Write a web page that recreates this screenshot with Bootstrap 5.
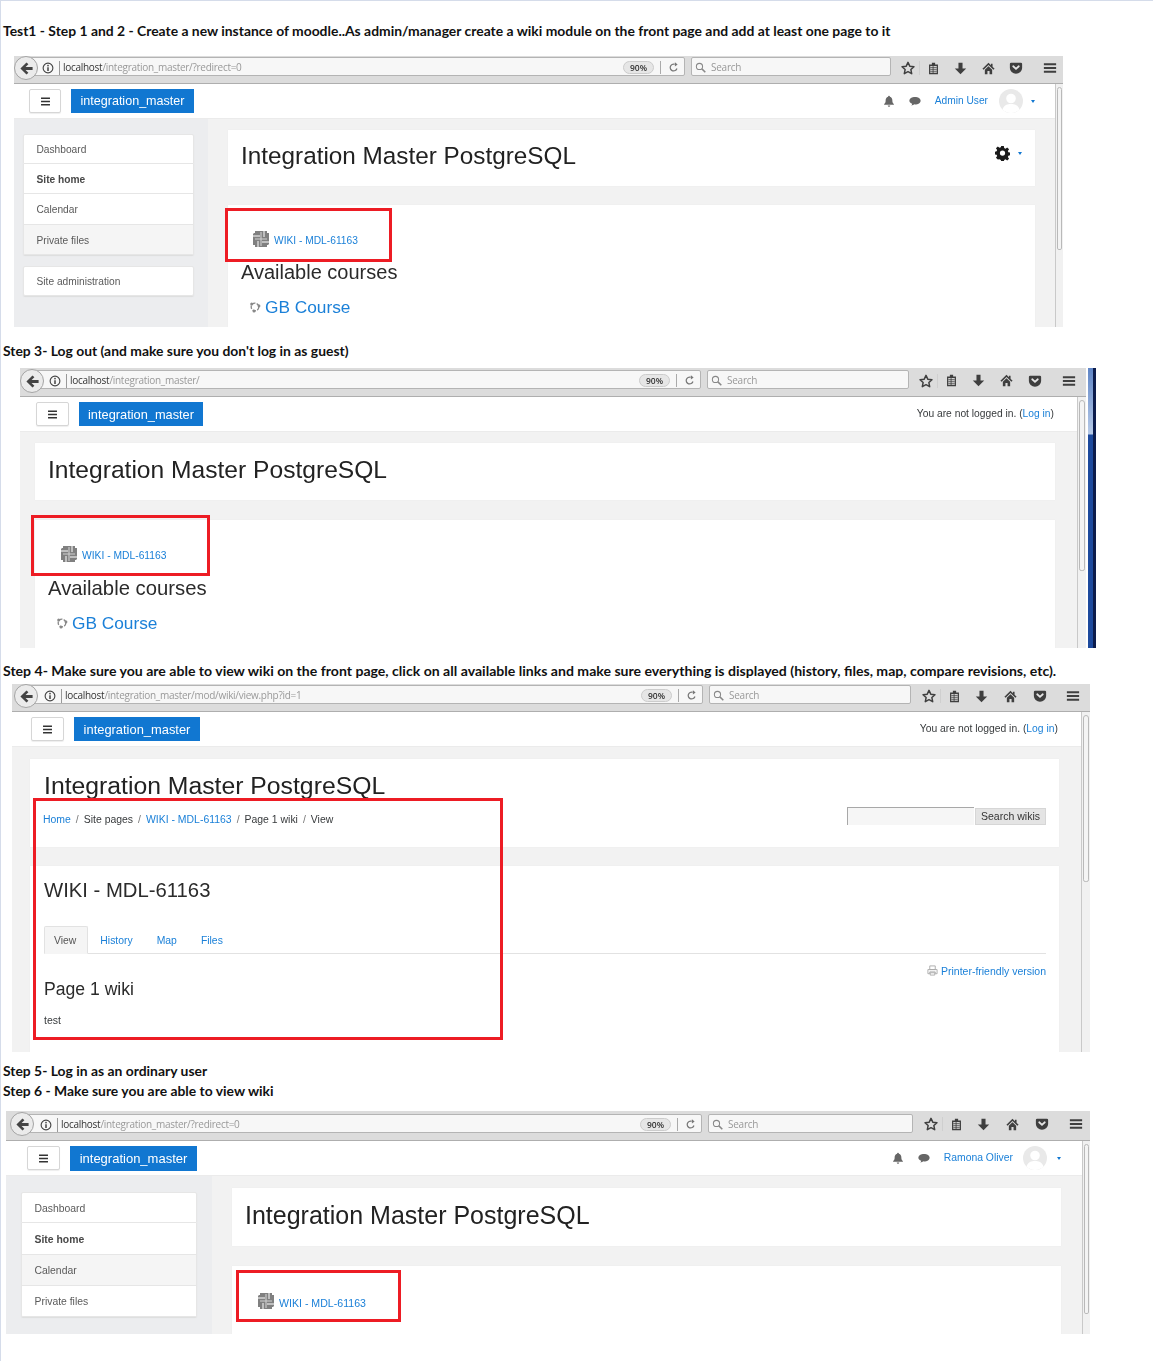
<!DOCTYPE html>
<html lang="en">
<head>
<meta charset="utf-8">
<title>Test steps</title>
<link href="https://cdn.jsdelivr.net/npm/bootstrap@5.3.0/dist/css/bootstrap.min.css" rel="stylesheet">
<style>
html,body{background:#fff;margin:0}
.sheet{border-top:1px solid #d5dcea;border-left:1px solid #d5dcea;height:1361px;overflow:hidden;font-family:"Liberation Sans",Arial,sans-serif;color:#373a3c}
.cap{font-family:Lato,sans-serif;font-weight:700;font-size:13.9px;line-height:20px;color:#111;padding-left:2px;margin:0;white-space:nowrap}
.cap-a{margin-top:20px}.cap-b{margin-top:14px}.cap-c{margin-top:13px;font-size:14.08px}.cap-d{margin-top:9px}
.shot{position:relative;overflow:hidden;display:flex;filter:blur(.35px)}
.shot-a{--tb:28px;--sw:200px;--tw:172px;--tp:5px;--p:28px;--r:0px;--hl:15px;--hw:32px;--bw:123px;--bf:12.57px;--bh:24px;--blh:24px;--h1:24.3px;--ht:11px;--f:10.23px;--uf:10.2px;--pl:20px;--pr:20px;--pt:11px;--ch:56px;--cg:19px;--ci:13px;--ix:11px;--side:194px;--sm:9px;--smr:14px;--st:15px;--sh:30.2px;--ut:1px;--ul:11px;--bl:0px;--bt:0px;--sbw:8px;--wt:25px;--ur:20.5px;--am:11px;--cm:7.5px;
  margin:15px 0 0 13px;width:1049px;height:271px}
.shot-b{--tb:29px;--sw:202px;--tw:177px;--tp:5px;--p:28.5px;--r:4px;--hl:16px;--hw:33px;--bw:124px;--bf:12.8px;--bh:24px;--blh:25px;--h1:24.6px;--ht:12px;--f:10.3px;--uf:10.27px;--pl:15px;--pr:22px;--pt:11px;--ch:57px;--cg:20px;--ci:13px;--ix:12px;--ut:2px;--ul:12px;--bl:0px;--bt:1px;--sbw:9px;--wt:25px;
  margin:7px 0 0 19px;width:1076px;height:280px}
.shot-c{--tb:28px;--sw:202px;--tw:179px;--tp:6px;--p:29px;--r:4px;--hl:19px;--hw:33px;--bw:126px;--bf:12.9px;--bh:24px;--blh:25px;--h1:24.75px;--ht:12px;--f:10.5px;--uf:10.35px;--pl:18px;--pr:22px;--pt:12px;--ch:88px;--cg:19px;--ci:14px;--ix:12px;--ut:1px;--ul:13px;--bl:2px;--bt:0px;--sbw:9px;
  margin:3px 0 0 11px;width:1078px;height:368px}
.shot-d{--tb:30px;--sw:205px;--tw:177px;--tp:6px;--p:29px;--r:1px;--hl:21px;--hw:33px;--bw:127px;--bf:13px;--bh:25px;--blh:25px;--h1:25px;--ht:12px;--f:10.6px;--uf:10.4px;--pl:20px;--pr:21px;--pt:12px;--ch:58px;--cg:20px;--ci:13px;--ix:12px;--side:206px;--sm:15px;--smr:15px;--st:16px;--sh:31.25px;--ut:3px;--ul:13px;--bl:4px;--bt:1px;--sbw:8px;--wt:26px;--ur:21.5px;--am:10px;--cm:9.5px;
  margin:10px 0 0 5px;width:1084px;height:223px}
.inner{flex:1 1 auto;min-width:0;display:flex;flex-direction:column}
.stripe{flex:0 0 8px;margin-left:2px;background:linear-gradient(90deg,transparent 62%,#0c1c4c 62%),linear-gradient(180deg,#5f85c6 0,#b8cbe8 66px,#1d4a9d 67px,#1d4a9d 100%)}
/* browser toolbar */
.tb{height:var(--tb);flex:0 0 var(--tb);background:#dcdcdc;border-bottom:1px solid #aeaeae;display:flex;align-items:flex-start;position:relative;font-family:"Open Sans",sans-serif}
.backb{flex:0 0 24px;width:24px;height:24px;margin:var(--bt) -8px 0 var(--bl);border-radius:50%;background:#ebebeb;border:1px solid #a4a4a4;display:flex;align-items:center;justify-content:center;position:relative;z-index:1;color:#444}
.urlb{flex:1 1 auto;height:19px;margin-top:var(--ut);background:#f7f7f7;border:1px solid #b4b4b4;border-radius:0 2px 2px 0;display:flex;align-items:center;padding:2px 0 0 var(--ul);font-size:10px;letter-spacing:-.28px;color:#999;min-width:0;white-space:nowrap}
.urlb b{font-weight:400;color:#333}
.ubi{color:#444;display:flex;margin-right:5px}
.usep{width:1px;height:14px;background:#999;margin-right:3px}
.upct{margin-left:auto;background:#e6e6e6;border:1px solid #ccc;border-radius:8px;font-size:8.5px;color:#333;line-height:11px;padding:0 6px;font-weight:600;letter-spacing:0}
.usep2{width:1px;height:13px;background:#aaa;margin:0 7px 0 6px}
.urel{color:#777;display:flex;margin-right:5px}
.srch{flex:0 0 var(--sw);width:var(--sw);height:19px;margin:var(--ut) 0 0 6px;background:#f7f7f7;border:1px solid #b4b4b4;border-radius:2px;display:flex;align-items:center;gap:5px;padding:2px 0 0 3px;font-size:10px;letter-spacing:-.25px;color:#999}
.srch svg{color:#888}
.tools{flex:0 0 var(--tw);width:var(--tw);display:flex;height:100%;align-items:center;color:#3f3f3f;padding:0 0 3px var(--tp)}
.tslot{flex:0 0 var(--p);width:var(--p);display:flex;justify-content:center}
.tslot-st{flex:0 0 24px;width:24px;display:flex;justify-content:center;border-right:1px solid #cfcfcf}
.tslot-cl{flex:0 0 26px;width:26px;display:flex;justify-content:center}
.tslot-me{flex:0 0 26px;width:26px;display:flex;justify-content:center;margin-left:auto;margin-right:var(--r)}
/* moodle page */
.view{flex:1 1 auto;display:flex;min-height:0}
.pg{flex:1 1 auto;min-width:0;display:flex;flex-direction:column;background:#f2f2f2}
.bar{flex:0 0 var(--sbw);width:var(--sbw);background:#f1f1f1;border-left:1px solid #c9c9c9;padding:3px 1px 0}
.thumb{background:#f4f4f4;border:1px solid #b9b9b9;border-radius:4px 4px 3px 3px;width:100%}
.thumb-a{height:163px}.thumb-b{height:171px}.thumb-c{height:167px}.thumb-d{height:170px}
.mnav{flex:0 0 35px;height:35px;background:#fff;border-bottom:1px solid #ebebeb;padding:0 0 0 var(--hl);display:flex;align-items:center;font-size:var(--uf);flex-wrap:nowrap;justify-content:flex-start}
.hamb{width:var(--hw);height:24px;background:#fff;border:1px solid #d6d6d6;border-radius:2px;display:flex;align-items:center;justify-content:center;color:#333;box-shadow:0 1px 1px #eee;padding:0}
.brandb{width:var(--bw);height:var(--bh);margin-left:10px;background:#1177d1;color:#fff;font-size:var(--bf);line-height:var(--blh);text-align:center;white-space:nowrap;text-decoration:none}
.userb{margin-left:auto;display:flex;align-items:center;color:#666;white-space:pre}
.lnk{color:#1b80d8;text-decoration:none}
.uname{margin-left:13.5px}.bell2{margin-left:14px;display:flex}.bell1{display:flex}
.avat{margin-left:var(--am);display:flex}
.ucaret{margin-left:var(--cm);margin-right:var(--ur);width:0;height:0;border-left:2.5px solid transparent;border-right:2.5px solid transparent;border-top:3px solid #1177d1}
.nolog{margin-right:23px;color:#373a3c}
.cols{flex:1 1 auto;display:flex;min-height:0}
.side{flex:0 0 var(--side);width:var(--side);background:#ecedef;padding:var(--st) var(--smr) 0 var(--sm)}
.side .list-group{border-radius:2px;box-shadow:0 1px 1px #ddd;margin-bottom:11px}
.side .list-group-item{height:var(--sh);padding:2px 12.5px 0;display:flex;align-items:center;font-size:var(--uf);color:#5a5a5a;border-color:#e6e6e6;background:#fff}
.side .list-group-item.sel{font-weight:700;color:#484848}
.side .list-group-item.hov{background:#f5f5f5}
.maincol{flex:1 1 auto;min-width:0;padding:var(--pt) var(--pr) 0 var(--pl);overflow:hidden}
.sect{background:#fff;border:0;border-radius:0;padding:0 var(--ci);box-shadow:0 0 1px #e4e4e4}
.head{height:var(--ch);display:flex;align-items:flex-start;justify-content:space-between;margin-bottom:var(--cg)}
.head h1{font-size:var(--h1);font-weight:400;line-height:30px;margin:0;padding-top:var(--ht);white-space:nowrap;color:#222}
.gear{display:flex;align-items:center;gap:8px;padding:16px 0 0 0;color:#1a1a1a}
.gear i{display:block;width:0;height:0;border-left:2.5px solid transparent;border-right:2.5px solid transparent;border-top:3px solid #1177d1}
.body2{height:400px;padding-top:var(--wt)}
.wikir{display:flex;align-items:flex-end;margin-left:var(--ix);gap:4px;font-size:var(--f);line-height:14px}
.wikir svg{display:block}
.wikir a{padding-bottom:.4px}
.avail{font-size:20px;line-height:24px;font-weight:400;margin:12px 0 0;color:#2b2b2b}
.gbr{display:flex;align-items:center;gap:4px;margin:11px 0 0 8px;font-size:17.3px;line-height:24px}
.gbr svg{color:#888}
.shot-b .avail{font-size:20.3px;margin-top:13px}
.shot-b .gbr{margin-top:11px;font-size:17.3px}
/* wiki page */
.head-c{display:block}
.crumbr{display:flex;justify-content:space-between;align-items:flex-start;margin:6px -1px 0 -1px;height:19px}
.breadcrumb{--bs-breadcrumb-margin-bottom:0;--bs-breadcrumb-item-padding-x:5px;--bs-breadcrumb-font-size:10.45px;--bs-breadcrumb-divider-color:#777;--bs-breadcrumb-item-active-color:#373a3c;line-height:14px;margin-top:6px}
.wsrch{display:flex;align-items:flex-start;margin-top:0}
.wsrch .fld{width:127px;height:18px;background:#f6f6f6;border-top:1px solid #a8a8a8;border-left:1px solid #a8a8a8;display:block}
.wsrch .gobtn{width:71px;height:17px;font-size:10.5px;line-height:15px;padding:0;margin:1px 0 0 1px;background:#e4e4e4;border:1px solid #d6d6d6;border-radius:0;color:#333}
.wbody{height:400px;padding-top:11px}
.wbody h2{font-size:20.3px;line-height:26px;font-weight:400;margin:0;color:#2b2b2b}
.wtabs{margin-top:23px;height:27.5px;font-size:10.4px;--bs-nav-tabs-border-color:#e2e2e2;--bs-nav-tabs-border-radius:2px;flex-wrap:nowrap;margin-right:-1px}
.wtabs .nav-link{padding:0 11px;height:27.5px;line-height:28px;color:#1b80d8;border:1px solid transparent}
.wtabs .nav-link.active{background:#f5f5f5;color:#555;border-color:#e2e2e2 #e2e2e2 #f5f5f5;padding-left:9px}
.prt{display:flex;justify-content:flex-end;align-items:center;gap:3px;font-size:10.5px;line-height:14px;margin:10px -1px 0 0;color:#aaa}
.pw{font-size:17.6px;line-height:22px;font-weight:400;margin:0;color:#2b2b2b}
.tst{font-size:10.5px;line-height:14px;margin:13px 0 0}
.redb{position:absolute;border:3.5px solid #ed1c24;z-index:5}
.rb-a{left:211px;top:152px;width:167px;height:54px}
.rb-b{left:11px;top:147px;width:179px;height:61px}
.rb-c{left:21px;top:114px;width:470px;height:242px}
.rb-d{left:230px;top:159px;width:165px;height:52px}
</style>
</head>
<body>
<svg class="d-none" xmlns="http://www.w3.org/2000/svg">
<symbol id="i-back" viewBox="0 0 16 16"><path d="M8 1.500 1.500 8 8 14.500l2-2L7 9.600h7.500V6.400H7l3-2.900z" fill="currentColor"/></symbol>
<symbol id="i-info" viewBox="0 0 16 16"><circle cx="8" cy="8" r="6.500" fill="none" stroke="currentColor" stroke-width="1.500"/><rect x="7" y="7" width="2" height="5" fill="currentColor"/><rect x="7" y="3.800" width="2" height="2" fill="currentColor"/></symbol>
<symbol id="i-rel" viewBox="0 0 16 16"><path d="M13 9.500A5 5 0 1 1 9.800 3.300" fill="none" stroke="currentColor" stroke-width="1.800"/><path d="M10 .5v6l4-3z" fill="currentColor"/></symbol>
<symbol id="i-glass" viewBox="0 0 16 16"><circle cx="6.500" cy="6.500" r="4.500" fill="none" stroke="currentColor" stroke-width="1.500"/><path d="m10 10 5 5" stroke="currentColor" stroke-width="2.200"/></symbol>
<symbol id="i-star" viewBox="0 0 16 16"><path d="m8 1.500 2 4.400 4.800.6-3.500 3.300.9 4.700L8 12.200l-4.200 2.300.9-4.700L1.200 6.500 6 5.900z" fill="none" stroke="currentColor" stroke-width="1.700" stroke-linejoin="round"/></symbol>
<symbol id="i-clip" viewBox="0 0 16 16"><path d="M6 1h4v2h3.500v12h-11V3H6z" fill="currentColor"/><path d="M4 5h8v8.500H4z" fill="#dcdcdc"/><path d="M4 7h8M4 9.500h8M4 12h8M7.500 5v9" stroke="currentColor" stroke-width="1"/></symbol>
<symbol id="i-down" viewBox="0 0 16 16"><path d="M5.500 1h5v7H15l-7 7-7-7h4.500z" fill="currentColor"/></symbol>
<symbol id="i-home" viewBox="0 0 16 16"><path d="M8 1 .5 8.300 2 9.500l6-5.700 6 5.700 1.500-1.200L13 5.800V2h-2v1.900z" fill="currentColor"/><path d="M3.500 9.500 8 5.300l4.500 4.200V15H9.300v-4H6.700v4H3.500z" fill="currentColor"/></symbol>
<symbol id="i-pocket" viewBox="0 0 16 16"><path d="M2.500 2h11A1.500 1.500 0 0 1 15 3.500V8A7 6.500 0 0 1 1 8V3.500A1.500 1.500 0 0 1 2.500 2z" fill="currentColor"/><path d="M4.800 6 8 9l3.200-3" fill="none" stroke="#e6e6e6" stroke-width="2" stroke-linecap="round"/></symbol>
<symbol id="i-menu" viewBox="0 0 16 16"><path d="M1 2.500h14v2.300H1zM1 6.900h14v2.300H1zM1 11.200h14v2.300H1z" fill="currentColor"/></symbol>
<symbol id="i-bars" viewBox="0 0 16 16"><path d="M2.500 3h11v1.800h-11zM2.500 7.100h11v1.800h-11zM2.500 11.200h11V13h-11z" fill="currentColor"/></symbol>
<symbol id="i-bell" viewBox="0 0 16 16"><path d="M8 1a1.200 1.200 0 0 1 1.200 1.300C11.500 3 12.500 5 12.500 7.500c0 2.500.8 3.500 2 4.500v1h-13v-1c1.200-1 2-2 2-4.500S4.500 3 6.800 2.300A1.200 1.200 0 0 1 8 1zM6.300 14h3.400a1.700 1.700 0 0 1-3.400 0z" fill="currentColor"/></symbol>
<symbol id="i-chat" viewBox="0 0 16 16"><path d="M8 2.500c4 0 7.500 2 7.500 5s-3.500 5-7.500 5l-1-.1c-1 1-2.500 1.700-4 1.600.7-.7 1.200-1.500 1.300-2.400C2 10.700.5 9.200.5 7.500c0-3 3.500-5 7.500-5z" fill="currentColor"/></symbol>
<symbol id="i-gear" viewBox="0 0 16 16"><path d="M6.600 0h2.800l.4 2.200 1.400.6L13 1.500l2 2-1.300 1.800.6 1.400 2.200.4v2.800l-2.200.4-.6 1.400 1.300 1.800-2 2-1.800-1.300-1.400.6-.4 2.200H6.600l-.4-2.200-1.400-.6L3 14.500l-2-2 1.300-1.800-.6-1.400L-.5 8.900V6.100l2.200-.4.600-1.400L1 2.500l2-2 1.800 1.300 1.400-.6z" fill="currentColor"/><circle cx="8" cy="7.500" r="2.800" fill="#fff"/></symbol>
<symbol id="i-avatar" viewBox="0 0 24 24"><circle cx="12" cy="12" r="12" fill="#e9e9e9"/><circle cx="12" cy="9.500" r="4.800" fill="#fff"/><path d="M3.500 20.500c1.500-4.500 5-5.500 8.500-5.500s7 1 8.500 5.500A12 12 0 0 1 12 24a12 12 0 0 1-8.500-3.500z" fill="#fff"/></symbol>
<symbol id="i-wiki" viewBox="0 0 18 18"><g fill="#808080"><rect x="1" y="3" width="16" height="12"/><rect x="3" y="1" width="12" height="16"/></g><g fill="none" stroke="#fff" stroke-width="1"><path d="M0 6h8M10 12h8M6 11v7M12 0v7M1 3h1M16 15h1"/></g><g fill="none" stroke="#cfcfcf" stroke-width="1.100"><path d="M9 2v14M3 9h12"/></g></symbol>
<symbol id="i-gb" viewBox="0 0 12 12"><circle cx="6" cy="6" r="3.800" fill="none" stroke="currentColor" stroke-width="1.300" stroke-dasharray="3.500 1.300"/><circle cx="2.700" cy="3" r="1.500" fill="currentColor"/><circle cx="10" cy="5" r="1.400" fill="currentColor"/><circle cx="5" cy="10" r="1.500" fill="currentColor"/></symbol>
<symbol id="i-print" viewBox="0 0 12 12"><path d="M3 1h6v4H3zM1 5h10v4.500H9V7.500H3v2H1zM3.500 8.500h5V11h-5z" fill="none" stroke="currentColor" stroke-width="1"/></symbol>
</svg>

<div class="sheet">
<p class="cap cap-a">Test1 - Step 1 and 2 - Create a new instance of moodle..As admin/manager create a wiki module on the front page and add at least one page to it</p>

<div class="shot shot-a">
 <div class="inner">
  <div class="tb">
   <span class="backb"><svg width="15" height="15"><use href="#i-back"/></svg></span>
   <div class="urlb"><span class="ubi"><svg width="12" height="12"><use href="#i-info"/></svg></span><span class="usep"></span><span><b>localhost</b>/integration_master/?redirect=0</span><span class="upct">90%</span><span class="usep2"></span><span class="urel"><svg width="11" height="11"><use href="#i-rel"/></svg></span></div>
   <div class="srch"><svg width="11" height="11"><use href="#i-glass"/></svg><span>Search</span></div>
   <div class="tools"><span class="tslot-st"><svg width="14" height="14"><use href="#i-star"/></svg></span><span class="tslot-cl"><svg width="13" height="13"><use href="#i-clip"/></svg></span><span class="tslot"><svg width="13" height="13"><use href="#i-down"/></svg></span><span class="tslot"><svg width="13" height="13"><use href="#i-home"/></svg></span><span class="tslot"><svg width="14" height="14"><use href="#i-pocket"/></svg></span><span class="tslot-me"><svg width="14" height="14"><use href="#i-menu"/></svg></span></div>
  </div>
  <div class="view">
   <div class="pg">
    <nav class="mnav">
     <button class="hamb" type="button"><svg width="13" height="13"><use href="#i-bars"/></svg></button>
     <a class="brandb">integration_master</a>
     <div class="userb"><span class="bell1"><svg width="12" height="12"><use href="#i-bell"/></svg></span><span class="bell2"><svg width="12" height="12"><use href="#i-chat"/></svg></span><a class="uname lnk">Admin User</a><span class="avat"><svg width="24" height="24"><use href="#i-avatar"/></svg></span><span class="ucaret"></span></div>
    </nav>
    <div class="cols">
     <aside class="side">
      <div class="list-group"><div class="list-group-item">Dashboard</div><div class="list-group-item sel">Site home</div><div class="list-group-item">Calendar</div><div class="list-group-item hov">Private files</div></div>
      <div class="list-group"><div class="list-group-item">Site administration</div></div>
     </aside>
     <main class="maincol">
      <section class="sect head"><h1>Integration Master PostgreSQL</h1><span class="gear"><svg width="15" height="15"><use href="#i-gear"/></svg><i></i></span></section>
      <section class="sect body2">
       <div class="wikir"><svg width="18" height="18"><use href="#i-wiki"/></svg><a class="lnk">WIKI - MDL-61163</a></div>
       <h2 class="avail">Available courses</h2>
       <div class="gbr"><svg width="12" height="12"><use href="#i-gb"/></svg><a class="lnk">GB Course</a></div>
      </section>
     </main>
    </div>
   </div>
   <div class="bar"><div class="thumb thumb-a"></div></div>
  </div>
 </div>
 <div class="redb rb-a"></div>
</div>

<p class="cap cap-b">Step 3- Log out (and make sure you don't log in as guest)</p>

<div class="shot shot-b">
 <div class="inner">
  <div class="tb">
   <span class="backb"><svg width="15" height="15"><use href="#i-back"/></svg></span>
   <div class="urlb"><span class="ubi"><svg width="12" height="12"><use href="#i-info"/></svg></span><span class="usep"></span><span><b>localhost</b>/integration_master/</span><span class="upct">90%</span><span class="usep2"></span><span class="urel"><svg width="11" height="11"><use href="#i-rel"/></svg></span></div>
   <div class="srch"><svg width="11" height="11"><use href="#i-glass"/></svg><span>Search</span></div>
   <div class="tools"><span class="tslot-st"><svg width="14" height="14"><use href="#i-star"/></svg></span><span class="tslot-cl"><svg width="13" height="13"><use href="#i-clip"/></svg></span><span class="tslot"><svg width="13" height="13"><use href="#i-down"/></svg></span><span class="tslot"><svg width="13" height="13"><use href="#i-home"/></svg></span><span class="tslot"><svg width="14" height="14"><use href="#i-pocket"/></svg></span><span class="tslot-me"><svg width="14" height="14"><use href="#i-menu"/></svg></span></div>
  </div>
  <div class="view">
   <div class="pg">
    <nav class="mnav">
     <button class="hamb" type="button"><svg width="13" height="13"><use href="#i-bars"/></svg></button>
     <a class="brandb">integration_master</a>
     <div class="userb nolog">You are not logged in. (<a class="lnk">Log in</a>)</div>
    </nav>
    <div class="cols">
     <main class="maincol">
      <section class="sect head"><h1>Integration Master PostgreSQL</h1></section>
      <section class="sect body2">
       <div class="wikir"><svg width="18" height="18"><use href="#i-wiki"/></svg><a class="lnk">WIKI - MDL-61163</a></div>
       <h2 class="avail">Available courses</h2>
       <div class="gbr"><svg width="12" height="12"><use href="#i-gb"/></svg><a class="lnk">GB Course</a></div>
      </section>
     </main>
    </div>
   </div>
   <div class="bar"><div class="thumb thumb-b"></div></div>
  </div>
 </div>
 <div class="stripe"></div>
 <div class="redb rb-b"></div>
</div>

<p class="cap cap-c">Step 4- Make sure you are able to view wiki on the front page, click on all available links and make sure everything is displayed (history, files, map, compare revisions, etc).</p>

<div class="shot shot-c">
 <div class="inner">
  <div class="tb">
   <span class="backb"><svg width="15" height="15"><use href="#i-back"/></svg></span>
   <div class="urlb"><span class="ubi"><svg width="12" height="12"><use href="#i-info"/></svg></span><span class="usep"></span><span><b>localhost</b>/integration_master/mod/wiki/view.php?id=1</span><span class="upct">90%</span><span class="usep2"></span><span class="urel"><svg width="11" height="11"><use href="#i-rel"/></svg></span></div>
   <div class="srch"><svg width="11" height="11"><use href="#i-glass"/></svg><span>Search</span></div>
   <div class="tools"><span class="tslot-st"><svg width="14" height="14"><use href="#i-star"/></svg></span><span class="tslot-cl"><svg width="13" height="13"><use href="#i-clip"/></svg></span><span class="tslot"><svg width="13" height="13"><use href="#i-down"/></svg></span><span class="tslot"><svg width="13" height="13"><use href="#i-home"/></svg></span><span class="tslot"><svg width="14" height="14"><use href="#i-pocket"/></svg></span><span class="tslot-me"><svg width="14" height="14"><use href="#i-menu"/></svg></span></div>
  </div>
  <div class="view">
   <div class="pg">
    <nav class="mnav">
     <button class="hamb" type="button"><svg width="13" height="13"><use href="#i-bars"/></svg></button>
     <a class="brandb">integration_master</a>
     <div class="userb nolog">You are not logged in. (<a class="lnk">Log in</a>)</div>
    </nav>
    <div class="cols">
     <main class="maincol">
      <section class="sect head head-c">
       <h1>Integration Master PostgreSQL</h1>
       <div class="crumbr">
        <nav><ol class="breadcrumb"><li class="breadcrumb-item"><a class="lnk">Home</a></li><li class="breadcrumb-item">Site pages</li><li class="breadcrumb-item"><a class="lnk">WIKI - MDL-61163</a></li><li class="breadcrumb-item">Page 1 wiki</li><li class="breadcrumb-item active">View</li></ol></nav>
        <div class="wsrch"><span class="fld"></span><button class="gobtn" type="button">Search wikis</button></div>
       </div>
      </section>
      <section class="sect wbody">
       <h2>WIKI - MDL-61163</h2>
       <ul class="nav nav-tabs wtabs"><li class="nav-item"><a class="nav-link active">View</a></li><li class="nav-item"><a class="nav-link">History</a></li><li class="nav-item"><a class="nav-link">Map</a></li><li class="nav-item"><a class="nav-link">Files</a></li></ul>
       <div class="prt"><svg width="11" height="11"><use href="#i-print"/></svg><a class="lnk">Printer-friendly version</a></div>
       <h3 class="pw">Page 1 wiki</h3>
       <p class="tst">test</p>
      </section>
     </main>
    </div>
   </div>
   <div class="bar"><div class="thumb thumb-c"></div></div>
  </div>
 </div>
 <div class="redb rb-c"></div>
</div>

<p class="cap cap-d">Step 5- Log in as an ordinary user</p>
<p class="cap">Step 6 - Make sure you are able to view wiki</p>

<div class="shot shot-d">
 <div class="inner">
  <div class="tb">
   <span class="backb"><svg width="15" height="15"><use href="#i-back"/></svg></span>
   <div class="urlb"><span class="ubi"><svg width="12" height="12"><use href="#i-info"/></svg></span><span class="usep"></span><span><b>localhost</b>/integration_master/?redirect=0</span><span class="upct">90%</span><span class="usep2"></span><span class="urel"><svg width="11" height="11"><use href="#i-rel"/></svg></span></div>
   <div class="srch"><svg width="11" height="11"><use href="#i-glass"/></svg><span>Search</span></div>
   <div class="tools"><span class="tslot-st"><svg width="14" height="14"><use href="#i-star"/></svg></span><span class="tslot-cl"><svg width="13" height="13"><use href="#i-clip"/></svg></span><span class="tslot"><svg width="13" height="13"><use href="#i-down"/></svg></span><span class="tslot"><svg width="13" height="13"><use href="#i-home"/></svg></span><span class="tslot"><svg width="14" height="14"><use href="#i-pocket"/></svg></span><span class="tslot-me"><svg width="14" height="14"><use href="#i-menu"/></svg></span></div>
  </div>
  <div class="view">
   <div class="pg">
    <nav class="mnav">
     <button class="hamb" type="button"><svg width="13" height="13"><use href="#i-bars"/></svg></button>
     <a class="brandb">integration_master</a>
     <div class="userb"><span class="bell1"><svg width="12" height="12"><use href="#i-bell"/></svg></span><span class="bell2"><svg width="12" height="12"><use href="#i-chat"/></svg></span><a class="uname lnk">Ramona Oliver</a><span class="avat"><svg width="24" height="24"><use href="#i-avatar"/></svg></span><span class="ucaret"></span></div>
    </nav>
    <div class="cols">
     <aside class="side">
      <div class="list-group"><div class="list-group-item">Dashboard</div><div class="list-group-item sel">Site home</div><div class="list-group-item hov">Calendar</div><div class="list-group-item">Private files</div></div>
     </aside>
     <main class="maincol">
      <section class="sect head"><h1>Integration Master PostgreSQL</h1></section>
      <section class="sect body2">
       <div class="wikir"><svg width="18" height="18"><use href="#i-wiki"/></svg><a class="lnk">WIKI - MDL-61163</a></div>
      </section>
     </main>
    </div>
   </div>
   <div class="bar"><div class="thumb thumb-d"></div></div>
  </div>
 </div>
 <div class="redb rb-d"></div>
</div>
</div>
<script src="https://cdn.jsdelivr.net/npm/bootstrap@5.3.0/dist/js/bootstrap.bundle.min.js"></script>
</body>
</html>
